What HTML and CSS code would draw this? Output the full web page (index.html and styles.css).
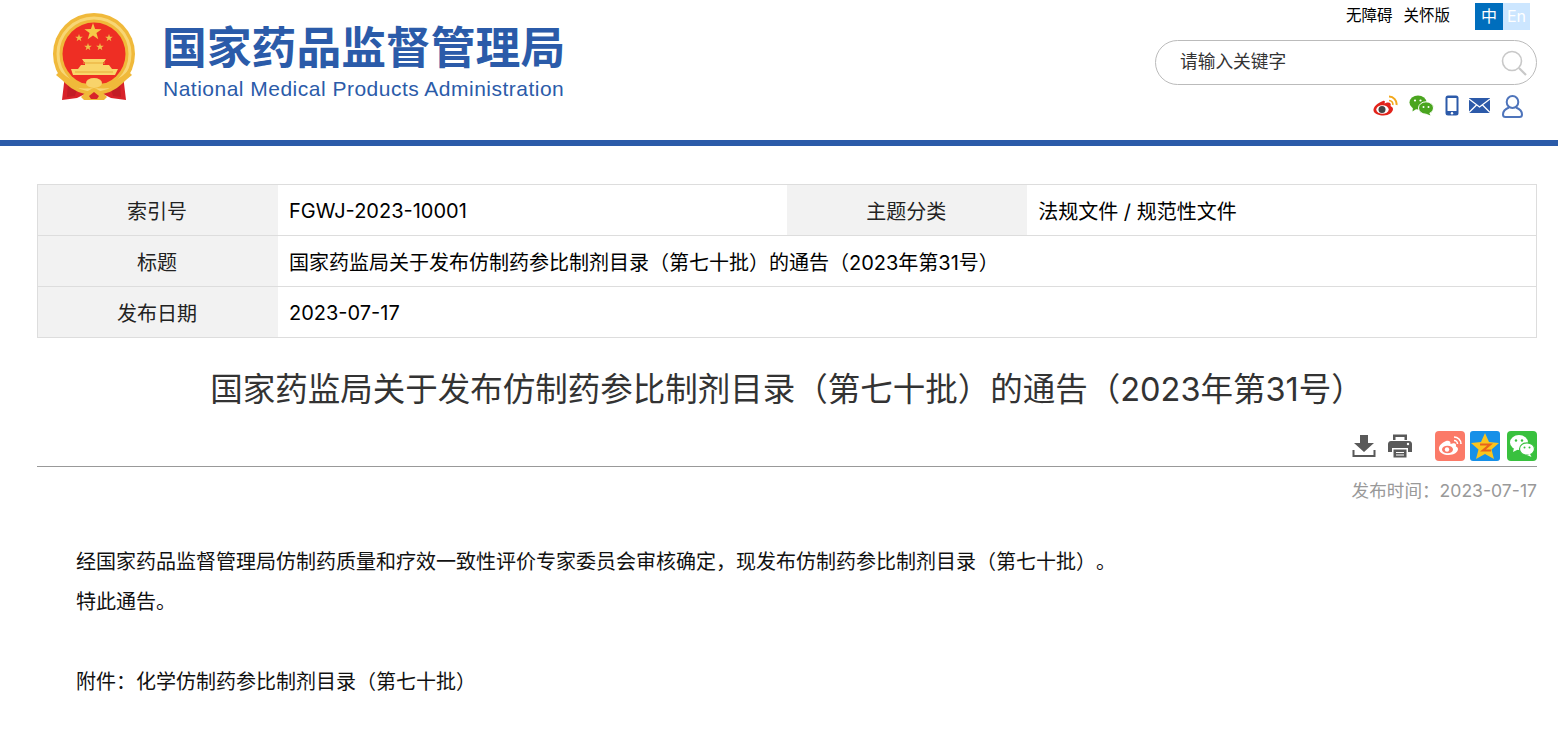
FILE: index.html
```html
<!DOCTYPE html>
<html lang="zh-CN">
<head>
  <meta charset="utf-8">
  <title>国家药监局关于发布仿制药参比制剂目录（第七十批）的通告（2023年第31号）</title>
  <link rel="stylesheet" href="styles.css">
</head>
<body>

<!-- header -->
<div class="header">
  <div class="logo">
    <svg class="emblem" width="84" height="88" viewBox="0 0 84 88">
      <defs>
        <path id="star" d="M0 -1 L0.235 -0.324 L0.951 -0.309 L0.380 0.124 L0.588 0.809 L0 0.400 L-0.588 0.809 L-0.380 0.124 L-0.951 -0.309 L-0.235 -0.324 Z"/>
      </defs>
      <!-- ribbons -->
      <path d="M12 62 L9 87 L24 85 L34 80 L48 80 L58 85 L73 87 L70 62 L41 74 Z" fill="#d8222a"/>
      <path d="M15 70 L14 84 L22 83 L24 76 Z M67 70 L68 84 L60 83 L58 76 Z" fill="#c21d26"/>
      <!-- ring -->
      <circle cx="41" cy="41" r="41" fill="#f0b93a"/>
      <circle cx="41" cy="41" r="36" fill="none" stroke="#f8d675" stroke-width="3"/>
      <circle cx="41" cy="41" r="31.500" fill="#ee2e24"/>
      <!-- stars -->
      <use href="#star" transform="translate(40 19) scale(9)" fill="#f5c947"/>
      <use href="#star" transform="translate(26 25) scale(4)" fill="#f0c04a"/>
      <use href="#star" transform="translate(56 25) scale(4)" fill="#f0c04a"/>
      <use href="#star" transform="translate(35 34) scale(4)" fill="#f0c04a"/>
      <use href="#star" transform="translate(47 34) scale(4)" fill="#f0c04a"/>
      <!-- gate -->
      <path d="M29 46 H53 L51 49 H50 V52 H56 L59 56 H25 L28 52 H32 V49 H31 Z" fill="#f9d66a"/>
      <path d="M18 56 H65 L62 62 H20 Z" fill="#f9d66a"/>
      <path d="M30 50 H52 M22 59 H60" stroke="#e7ab38" stroke-width="1" fill="none"/>
      <!-- swag -->
      <path d="M7 58 Q24 75 41 69 Q58 75 75 58 L79 62 Q60 80 41 74 Q22 80 3 62 Z" fill="#f0b93a"/>
      <ellipse cx="41" cy="70" rx="8" ry="5" fill="#f8d36a"/>
      <path d="M41 75 C35 77 32 80 28 84 L31 87 H51 L54 84 C50 80 47 77 41 75 Z" fill="#f0b93a"/>
      <path d="M36 83 L41 79 L46 83 L44 86 H38 Z" fill="#d8222a"/>
    </svg>
    <div class="logo-text">
      <div class="logo-cn">国家药品监督管理局</div>
      <div class="logo-en">National Medical Products Administration</div>
    </div>
  </div>

  <div class="header-right">
    <div class="top-links">
      <a class="top-link">无障碍</a>
      <a class="top-link">关怀版</a>
      <div class="lang">
        <span class="lang-cn">中</span><span class="lang-en">En</span>
      </div>
    </div>
    <div class="search">
      <span class="search-text">请输入关键字</span>
      <svg width="26" height="26" viewBox="0 0 26 26" fill="none" stroke="#c8c8c8">
        <circle cx="11" cy="11" r="9.500" stroke-width="1.600"/>
        <path d="M18 18 L25 25" stroke-width="2.200"/>
      </svg>
    </div>
    <div class="head-icons">
      <!-- weibo -->
      <svg class="hi-weibo" width="25" height="21" viewBox="0 0 25 21">
        <path d="M10 6 C5 7.500 0 12 0.500 15.500 C1 19 6 20.500 10.500 20.500 C16 20.500 20 17 20 14 C20 12 18 11.500 17.500 11 C18.500 8.500 17 7 14 7.500 L11.500 8.500 C12.500 6 11.500 5.500 10 6 Z" fill="#e2231a"/>
        <ellipse cx="9.500" cy="14.500" rx="6.200" ry="4.300" fill="#fff"/>
        <circle cx="9" cy="14.500" r="3.500" fill="#444"/>
        <path d="M16 1.500 A7.500 7.500 0 0 1 23.500 10" fill="none" stroke="#f2a81d" stroke-width="2"/>
        <path d="M16 5.500 A3.800 3.800 0 0 1 19.800 10" fill="none" stroke="#f2a81d" stroke-width="1.600"/>
      </svg>
      <!-- wechat -->
      <svg class="hi-wechat" width="25" height="21" viewBox="0 0 25 21">
        <ellipse cx="9" cy="7.500" rx="8.500" ry="7" fill="#4aa51f"/>
        <path d="M4 12 L3.500 16.500 L8 13.500 Z" fill="#4aa51f"/>
        <ellipse cx="17" cy="13" rx="7.500" ry="6.200" fill="#4aa51f" stroke="#fff" stroke-width="1"/>
        <path d="M20 17.500 L21.500 20.500 L16.500 18.500 Z" fill="#4aa51f"/>
        <circle cx="6" cy="5.500" r="1.100" fill="#fff"/>
        <circle cx="11.500" cy="5.500" r="1.100" fill="#fff"/>
        <circle cx="14.500" cy="12" r="1" fill="#fff"/>
        <circle cx="19.500" cy="12" r="1" fill="#fff"/>
      </svg>
      <!-- phone -->
      <svg class="hi-phone" width="14" height="21" viewBox="0 0 14 21">
        <rect x="0.500" y="0.500" width="13" height="20" rx="2.500" fill="#2c5aa9"/>
        <rect x="2.500" y="3" width="9" height="13" fill="#fff"/>
        <circle cx="7" cy="18.300" r="1.200" fill="#fff"/>
      </svg>
      <!-- mail -->
      <svg class="hi-mail" width="21" height="15" viewBox="0 0 21 15">
        <rect x="0" y="0" width="21" height="15" fill="#2c5aa9"/>
        <path d="M0 1 L10.500 9 L21 1 M0 14.500 L7.500 7 M21 14.500 L13.500 7" fill="none" stroke="#fff" stroke-width="1.300"/>
      </svg>
      <!-- user -->
      <svg class="hi-user" width="21" height="23" viewBox="0 0 21 23" fill="none" stroke="#4e74bb" stroke-width="2">
        <ellipse cx="10.500" cy="7" rx="5.800" ry="6"/>
        <path d="M7 12.500 C3 14 1 16.500 1 19.500 C1 21 2 22 3.500 22 H17.500 C19 22 20 21 20 19.500 C20 16.500 18 14 14 12.500"/>
      </svg>
    </div>
  </div>
</div>

<div class="main">

  <table class="info">
    <tr>
      <td class="lbl">索引号</td>
      <td class="val num">FGWJ-2023-10001</td>
      <td class="lbl">主题分类</td>
      <td class="val">法规文件 / 规范性文件</td>
    </tr>
    <tr>
      <td class="lbl">标题</td>
      <td class="val" colspan="3">国家药监局关于发布仿制药参比制剂目录（第七十批）的通告（2023年第31号）</td>
    </tr>
    <tr>
      <td class="lbl">发布日期</td>
      <td class="val num" colspan="3">2023-07-17</td>
    </tr>
  </table>

  <h1 class="title">国家药监局关于发布仿制药参比制剂目录（第七十批）的通告（2023年第31号）</h1>

  <div class="tools">
    <svg class="t-down" width="24" height="24" viewBox="0 0 24 24" fill="#595959">
      <path d="M8 1 H16 V9 H22 L12 18 L2 9 H8 Z"/>
      <path d="M0.500 16 V23 H23.500 V16 H21.500 V21 H2.500 V16 Z"/>
    </svg>
    <svg class="t-print" width="24" height="24" viewBox="0 0 24 24" fill="#595959">
      <path d="M5 0.500 H19 V6 H16.500 V3 H7.500 V6 H5 Z"/>
      <path d="M3 7 H21 C23 7 24 8.500 24 10 V18 H20 V14 H4 V18 H0 V10 C0 8.500 1 7 3 7 Z"/>
      <path d="M5.500 15.500 H18.500 V23.500 H5.500 Z M8 18 V19 H16 V18 Z M8 20.500 V21.500 H16 V20.500 Z" fill-rule="evenodd"/>
      <circle cx="20" cy="10" r="1.200" fill="#fff"/>
    </svg>
    <div class="shares">
      <svg class="tile" width="30" height="30" viewBox="0 0 30 30">
        <rect width="30" height="30" rx="4" fill="#fb7a68"/>
        <path d="M11 10 C7 11.500 3.500 15 4 18 C4.500 22 9 24 13.500 24 C19 24 23 21 23 18 C23 16.500 21.500 15.800 20.800 15.500 C21.800 13 20 11.500 17.500 12.500 L15.500 13 C16 10.500 14 9 11 10 Z" fill="#fff"/>
        <ellipse cx="12.500" cy="18.500" rx="5.500" ry="3.800" fill="#fb7a68"/>
        <circle cx="12" cy="18.500" r="2.200" fill="#fff"/>
        <path d="M19 6 A7 7 0 0 1 26 13 M19 9.500 A3.500 3.500 0 0 1 22.500 13" fill="none" stroke="#fff" stroke-width="1.600"/>
      </svg>
      <svg class="tile" width="30" height="30" viewBox="0 0 30 30">
        <rect width="30" height="30" rx="3" fill="#1690e8"/>
        <path d="M15 2 L19 11 L29 12 L21.500 18.500 L24 28 L15 23 L6 28 L8.500 18.500 L1 12 L11 11 Z" fill="#f9c41e"/>
        <path d="M10 13.500 H20 L13 19.500 H21" fill="none" stroke="#e8641b" stroke-width="2.200"/>
      </svg>
      <svg class="tile" width="30" height="30" viewBox="0 0 30 30">
        <rect width="30" height="30" rx="4" fill="#39c13e"/>
        <ellipse cx="12" cy="11.500" rx="9" ry="7.500" fill="#fff"/>
        <path d="M7 17 L6 21 L11 18.500 Z" fill="#fff"/>
        <ellipse cx="20" cy="18" rx="7.500" ry="6.200" fill="#fff" stroke="#39c13e" stroke-width="1.200"/>
        <path d="M23 23 L24.500 26 L20 24 Z" fill="#fff"/>
        <circle cx="9" cy="9.500" r="1.200" fill="#39c13e"/>
        <circle cx="15" cy="9.500" r="1.200" fill="#39c13e"/>
        <circle cx="17.500" cy="16.500" r="1" fill="#39c13e"/>
        <circle cx="22.500" cy="16.500" r="1" fill="#39c13e"/>
      </svg>
    </div>
  </div>

  <div class="pubdate">发布时间：2023-07-17</div>

  <div class="content">
    <p>经国家药品监督管理局仿制药质量和疗效一致性评价专家委员会审核确定，现发布仿制药参比制剂目录（第七十批）。</p>
    <p>特此通告。</p>
    <p class="blank">&nbsp;</p>
    <p>附件：化学仿制药参比制剂目录（第七十批）</p>
  </div>

</div>

</body>
</html>
```

FILE: styles.css
```css
html, body {
  margin: 0;
  padding: 0;
  background-color: #fff;
  font-family: Inter, "Noto Sans CJK SC", sans-serif;
  text-spacing-trim: space-all;
  color: #000;
}

body {
  overflow: hidden;
  height: 736px;
}

/* header */
.header {
  display: flex;
  justify-content: space-between;
  height: 140px;
  padding: 0 21px 0 53px;
  border-bottom: 6px solid #2b5ba9;
}

.logo {
  display: flex;
  align-items: flex-start;
  padding-top: 13px;
  gap: 26px;
}

.logo-text {
  padding-top: 7px;
  margin-left: -1px;
}

.logo-cn {
  font-size: 44.800px;
  line-height: 56px;
  font-weight: 700;
  color: #2b5ba9;
  white-space: nowrap;
}

.logo-en {
  font-family: "Liberation Sans", sans-serif;
  font-size: 21px;
  line-height: 26px;
  margin-left: 1px;
  letter-spacing: 0.49px;
  color: #2b5ba9;
  white-space: nowrap;
}

.header-right {
  width: 382px;
  padding-top: 3px;
}

.top-links {
  display: flex;
  align-items: center;
  justify-content: flex-end;
  height: 27px;
  padding-right: 7px;
}

.top-link {
  font-size: 15.500px;
  line-height: 20px;
  margin: -1px 11px 0 0;
  white-space: nowrap;
}

.top-link:last-of-type {
  margin-right: 25px;
}

.lang {
  display: flex;
  font-size: 16px;
  line-height: 27px;
  text-align: center;
  color: #fff;
}

.lang-cn {
  width: 28px;
  background-color: #006ebd;
}

.lang-en {
  width: 27px;
  background-color: #cce6ff;
}

.search {
  display: flex;
  align-items: center;
  justify-content: space-between;
  box-sizing: border-box;
  height: 45px;
  margin-top: 10px;
  padding: 0 9px 0 24px;
  border: 1.500px solid #bbb;
  border-radius: 23px;
}

.search-text {
  font-size: 17.700px;
  line-height: 40px;
  margin-top: -2px;
  color: #333;
}

.head-icons {
  display: flex;
  align-items: flex-start;
  justify-content: flex-end;
  margin-top: 10px;
  padding-right: 14px;
}

.hi-weibo { margin-right: 11px; }
.hi-wechat { margin-right: 11px; }
.hi-phone { margin-right: 10px; }
.hi-mail { margin: 3px 12px 0 0; }

/* main part */
.main {
  width: 1500px;
  margin: 38px 0 0 37px;
}

.info {
  width: 1500px;
  table-layout: fixed;
  border-collapse: collapse;
  border: 1px solid #ddd;
  font-size: 20px;
}

.info tr {
  height: 51px;
  border-bottom: 1px solid #ddd;
}

.lbl {
  width: 238px;
  padding: 0 2px 0 0;
  text-align: center;
  background-color: #f2f2f2;
  color: #222;
}

.val {
  padding: 0 12px 0 11px;
}

.num {
  padding-top: 2px;
}

.title {
  margin: 28px 0 0;
  font-size: 32.500px;
  line-height: 48px;
  font-weight: 400;
  text-align: center;
  color: #333;
}

.tools {
  display: flex;
  align-items: center;
  justify-content: flex-end;
  height: 30px;
  margin-top: 17px;
  border-bottom: 1px solid #999;
  padding-bottom: 5px;
}

.t-down { margin-right: 12px; }
.t-print { margin-right: 23px; }

.shares {
  display: flex;
  gap: 5px;
}

.shares .tile:last-child {
  margin-left: 2px;
}

.pubdate {
  margin-top: 10px;
  font-size: 17.600px;
  line-height: 28px;
  text-align: right;
  color: #999;
}

.content {
  margin-top: 37px;
  padding-left: 39px;
  font-size: 20px;
  line-height: 40px;
  color: #111;
}

.content p {
  margin: 0;
}
```
